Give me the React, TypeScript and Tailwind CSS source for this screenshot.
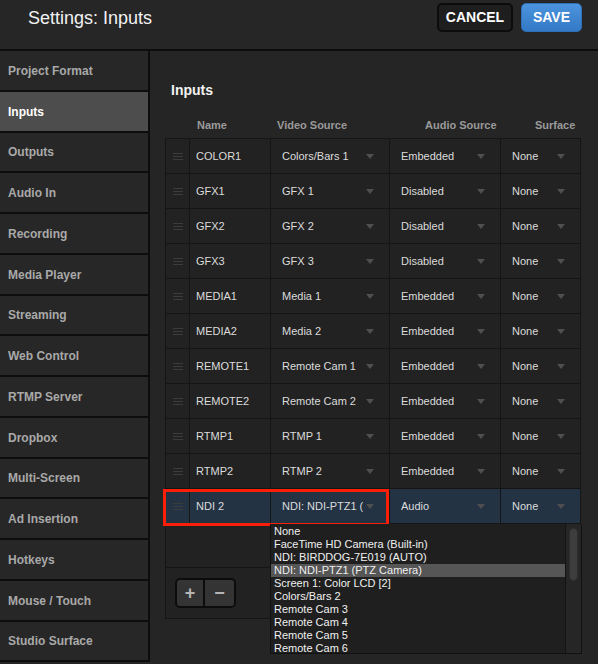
import React from "react";

const NAV = [
  "Project Format",
  "Inputs",
  "Outputs",
  "Audio In",
  "Recording",
  "Media Player",
  "Streaming",
  "Web Control",
  "RTMP Server",
  "Dropbox",
  "Multi-Screen",
  "Ad Insertion",
  "Hotkeys",
  "Mouse / Touch",
  "Studio Surface",
];

type Row = { name: string; video: string; audio: string; surface: string; selected?: boolean };

const ROWS: Row[] = [
  { name: "COLOR1", video: "Colors/Bars 1", audio: "Embedded", surface: "None" },
  { name: "GFX1", video: "GFX 1", audio: "Disabled", surface: "None" },
  { name: "GFX2", video: "GFX 2", audio: "Disabled", surface: "None" },
  { name: "GFX3", video: "GFX 3", audio: "Disabled", surface: "None" },
  { name: "MEDIA1", video: "Media 1", audio: "Embedded", surface: "None" },
  { name: "MEDIA2", video: "Media 2", audio: "Embedded", surface: "None" },
  { name: "REMOTE1", video: "Remote Cam 1", audio: "Embedded", surface: "None" },
  { name: "REMOTE2", video: "Remote Cam 2", audio: "Embedded", surface: "None" },
  { name: "RTMP1", video: "RTMP 1", audio: "Embedded", surface: "None" },
  { name: "RTMP2", video: "RTMP 2", audio: "Embedded", surface: "None" },
  { name: "NDI 2", video: "NDI: NDI-PTZ1 (PTZ Camera)", audio: "Audio", surface: "None", selected: true },
];

const OPTIONS = [
  "None",
  "FaceTime HD Camera (Built-in)",
  "NDI: BIRDDOG-7E019 (AUTO)",
  "NDI: NDI-PTZ1 (PTZ Camera)",
  "Screen 1: Color LCD [2]",
  "Colors/Bars 2",
  "Remote Cam 3",
  "Remote Cam 4",
  "Remote Cam 5",
  "Remote Cam 6",
];

function Handle() {
  return (
    <div className="flex w-[10px] flex-col gap-[2px]">
      <span className="h-px bg-[#3c3c3c]" />
      <span className="h-px bg-[#3c3c3c]" />
      <span className="h-px bg-[#3c3c3c]" />
    </div>
  );
}

function Caret() {
  return (
    <svg width="8" height="5" viewBox="0 0 8 5" className="shrink-0">
      <path d="M0 0h8L4 5z" fill="#4f4f4f" />
    </svg>
  );
}

function Select({ value, className }: { value: string; className: string }) {
  return (
    <div className={`flex items-center gap-[3px] border-r border-[#151515] pl-[11px] pr-[15px] ${className}`}>
      <span className="min-w-0 flex-1 overflow-hidden whitespace-nowrap">{value}</span>
      <Caret />
    </div>
  );
}

function TableRow({ row }: { row: Row }) {
  return (
    <div
      className={`relative flex h-[35px] border-b border-[#151515] text-[11px] text-[#dcdcdc] ${
        row.selected ? "bg-[#233344]" : "bg-[#222222]"
      }`}
    >
      <div className="flex w-[24px] items-center justify-center border-r border-[#151515]">
        <Handle />
      </div>
      <div className="flex w-[81px] items-center border-r border-[#151515] pl-[6px]">{row.name}</div>
      <Select value={row.video} className="w-[119px]" />
      <Select value={row.audio} className="w-[111px]" />
      <Select value={row.surface} className="w-[79px] border-r-0" />
      {row.selected && (
        <>
          <div className="pointer-events-none absolute left-[-3px] top-[0px] h-[37px] w-[226px] border-[3px] border-[#fb1f07]" />
          <div className="absolute left-[104px] top-[35px] z-10 h-[130px] w-[312px] border-b border-l border-r border-[#111] bg-[#1f1f1f]">
            <div className="flex h-full">
              <div className="flex-1 pt-[1px] text-[11px] leading-[13px] text-[#f0f0f0]">
                {OPTIONS.map((o, i) => (
                  <div key={o} className={`whitespace-nowrap pl-[3px] ${i === 3 ? "bg-[#565656]" : ""}`}>
                    {o}
                  </div>
                ))}
              </div>
              <div className="w-[16px] border-l border-[#141414] bg-[#262626] px-[3px] pt-[4px]">
                <div className="h-[53px] w-[9px] rounded-full border border-[#2e2e2e] bg-[#3d3d3d]" />
              </div>
            </div>
          </div>
        </>
      )}
    </div>
  );
}

export default function App() {
  return (
    <div className="h-[664px] w-[598px] overflow-hidden bg-[#252525] font-['Liberation_Sans',Arial,sans-serif]">
      <header className="flex h-[51px] items-start justify-between border-b-2 border-[#0d0d0d] bg-[#262626] pl-[28px] pr-[16px] pt-[3px]">
        <h1 className="mt-[2px] text-[18px] leading-[26px] text-[#f2f2f2]">Settings: Inputs</h1>
        <div className="flex gap-[8px]">
          <button className="h-[29px] w-[76px] rounded-[5px] border-2 border-[#0c0c0c] bg-[#1e1e1e] text-[14px] font-bold text-white">
            CANCEL
          </button>
          <button className="h-[29px] w-[61px] rounded-[5px] border border-[#2f6fb5] bg-gradient-to-b from-[#4c94dd] to-[#3379c6] text-[14px] font-bold text-white">
            SAVE
          </button>
        </div>
      </header>

      <div className="flex">
        <nav className="w-[150px] shrink-0 border-r-2 border-[#0d0d0d] bg-[#0d0d0d]">
          {NAV.map((item) => (
            <div
              key={item}
              className={`flex h-[40.75px] items-center border-b-2 border-[#0d0d0d] pl-[8px] pt-[1px] text-[12px] font-bold ${
                item === "Inputs" ? "bg-[#4d4d4d] text-white" : "bg-[#272727] text-[#a9a9a9]"
              }`}
            >
              {item}
            </div>
          ))}
        </nav>

        <main className="flex-1 pl-[15px] pt-[30px]">
          <h2 className="pl-[6px] text-[14px] font-bold leading-[18px] text-[#f2f2f2]">Inputs</h2>
          <div className="mt-[14px] flex h-[24px] w-[416px] items-center whitespace-nowrap text-[11px] font-bold text-[#9a9a9a]">
            <div className="w-[32px] shrink-0" />
            <div className="w-[80px] shrink-0">Name</div>
            <div className="w-[148px] shrink-0">Video Source</div>
            <div className="w-[110px] shrink-0">Audio Source</div>
            <div className="shrink-0">Surface</div>
          </div>
          <div className="mt-[1px] w-[416px] border border-[#151515] bg-[#222222]">
            {ROWS.map((r) => (
              <TableRow key={r.name} row={r} />
            ))}
            <div className="h-[44px] border-b border-[#151515]" />
            <div className="flex h-[50px] items-start pl-[9px] pt-[10px]">
              <div className="flex h-[30px] overflow-hidden rounded-[5px] border-2 border-[#0c0c0c]">
                <button className="flex w-[28px] items-center justify-center border-r-2 border-[#0c0c0c] bg-[#343434] text-[18px] font-bold leading-none text-[#b5b5b5]">
                  +
                </button>
                <button className="flex w-[29px] items-center justify-center bg-[#343434] text-[18px] font-bold leading-none text-[#b5b5b5]">
                  −
                </button>
              </div>
            </div>
          </div>
        </main>
      </div>
    </div>
  );
}
